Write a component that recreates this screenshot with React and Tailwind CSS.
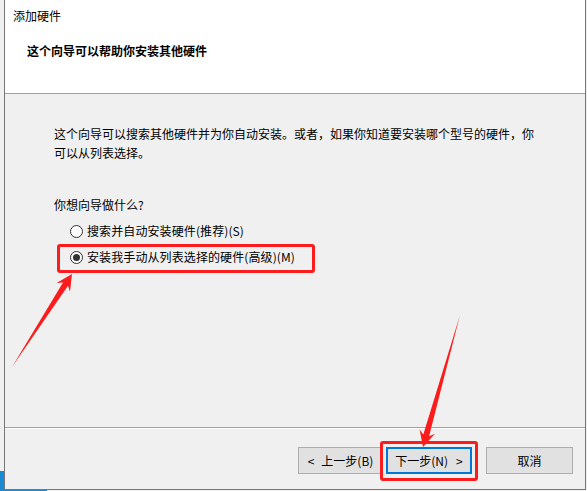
import React from 'react';

// Arrow drawn as a tapered shaft with swept-back barbs, from tail to tip
function Arrow({ points }) {
  return <polygon points={points} fill="#fb1d1d" />;
}

function Radio({ checked, label }) {
  return (
    <div className="flex h-[20px] items-center gap-[4px]">
      <span className="flex h-[13px] w-[13px] items-center justify-center rounded-full border border-[#333333] bg-white">
        {checked && <span className="h-[7px] w-[7px] rounded-full bg-[#333333]" />}
      </span>
      <span className="leading-[20px] tracking-[0.1px]">{label}</span>
    </div>
  );
}

function WizardButton({ children, focused, className = '' }) {
  return (
    <button
      className={`flex h-[27px] items-center justify-center bg-[#e1e1e1] text-[12px] text-black ${
        focused ? 'border-2 border-[#0078d7]' : 'border border-[#adadad]'
      } ${className}`}
    >
      {children}
    </button>
  );
}

export default function App() {
  return (
    <div
      className="relative h-[491px] w-[587px] overflow-hidden bg-[#f0f0f0] text-[12px] text-black"
      style={{ fontFamily: '"Noto Sans CJK SC", "Noto Sans", sans-serif' }}
    >
      {/* taskbar corner peeking out below the dialog */}
      <div className="absolute bottom-0 left-0 h-[20px] w-[47px] bg-[#1a8ad4]" />

      <div className="relative ml-[4px] flex h-[490px] w-[582px] flex-col border-x border-b border-[#767676] bg-[#f0f0f0]">
        {/* header */}
        <div className="h-[94px] border-b border-[#a0a0a0] bg-white">
          <div className="pl-[8px] pt-[8px] leading-[16px]">添加硬件</div>
          <div className="mt-[19px] pl-[22px] font-bold leading-[16px]">这个向导可以帮助你安装其他硬件</div>
        </div>

        {/* body */}
        <div className="flex-1 pl-[49px]">
          <p className="mt-[30px] w-[486px] leading-[19px]">
            这个向导可以搜索其他硬件并为你自动安装。或者，如果你知道要安装哪个型号的硬件，你可以从列表选择。
          </p>
          <p className="mt-[33px] leading-[19px]">你想向导做什么?</p>

          <div className="mt-[7px] ml-[16px]">
            <Radio label="搜索并自动安装硬件(推荐)(S)" />
          </div>
          <div className="ml-[3px] mt-[3px] w-[258px] rounded-[3px] border-[3px] border-[#fb1d1d] pb-[3px] pl-[10px]">
            <Radio checked label="安装我手动从列表选择的硬件(高级)(M)" />
          </div>
        </div>

        {/* footer */}
        <div className="border-t border-[#a0a0a0]">
          <div className="flex justify-end border-t border-white pb-[15px] pr-[12px] pt-[18px]">
            <WizardButton className="w-[85px]">
              &lt;<span className="ml-[7px]">上一步(B)</span>
            </WizardButton>
            <div className="relative ml-[3px]">
              <WizardButton focused className="w-[86px]">
                下一步(N)<span className="ml-[8px]">&gt;</span>
              </WizardButton>
              <div className="pointer-events-none absolute -bottom-[7px] -left-[6px] -right-[6px] -top-[6px] rounded-[3px] border-[3px] border-[#fb1d1d]" />
            </div>
            <WizardButton className="ml-[14px] w-[87px]">取消</WizardButton>
          </div>
        </div>
      </div>

      {/* annotation arrows */}
      <svg className="pointer-events-none absolute inset-0" width="587" height="491" viewBox="0 0 587 491">
        <Arrow points="12,367 63,282.5 56.6,283.1 72,274 70,291.7 68,285.7" />
        <Arrow points="460,315 423.3,434.6 419.6,429.4 423,447 435,433.8 429.1,436.2" />
      </svg>
    </div>
  );
}
